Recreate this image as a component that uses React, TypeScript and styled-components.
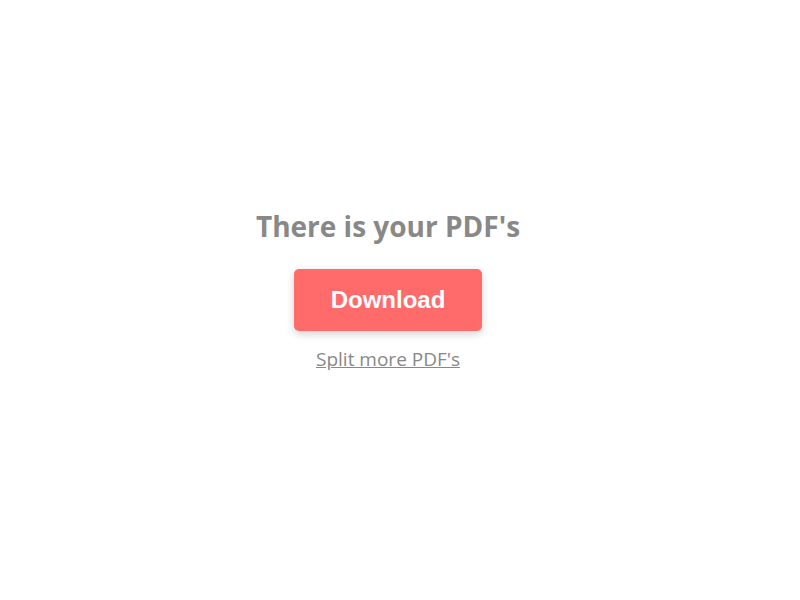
import styled, { createGlobalStyle } from 'styled-components';

const GlobalStyle = createGlobalStyle`
  html, body {
    margin: 0;
    padding: 0;
    background: #ffffff;
  }
`;

const Page = styled.main`
  box-sizing: border-box;
  width: 776px;
  height: 600px;
  display: flex;
  flex-direction: column;
  align-items: center;
  padding-top: 206px;
  font-family: 'Open Sans', 'Noto Sans', sans-serif;
`;

const Title = styled.h1`
  margin: 0;
  font-size: 28px;
  font-weight: 700;
  line-height: 40px;
  color: #888888;
`;

const DownloadButton = styled.button`
  margin-top: 23px;
  width: 188px;
  height: 62px;
  border: none;
  border-radius: 5px;
  background: #ff6b6b;
  color: #ffffff;
  font-family: 'Liberation Sans', Arial, sans-serif;
  font-size: 24px;
  font-weight: 700;
  box-shadow: 0 3px 8px rgba(0, 0, 0, 0.18);
  cursor: pointer;
`;

const MoreLink = styled.a`
  margin-top: 15px;
  font-size: 19px;
  line-height: 26px;
  color: #888888;
  text-decoration: underline;
  cursor: pointer;
`;

export default function App() {
  return (
    <>
      <GlobalStyle />
      <Page>
        <Title>There is your PDF's</Title>
        <DownloadButton>Download</DownloadButton>
        <MoreLink>Split more PDF's</MoreLink>
      </Page>
    </>
  );
}
